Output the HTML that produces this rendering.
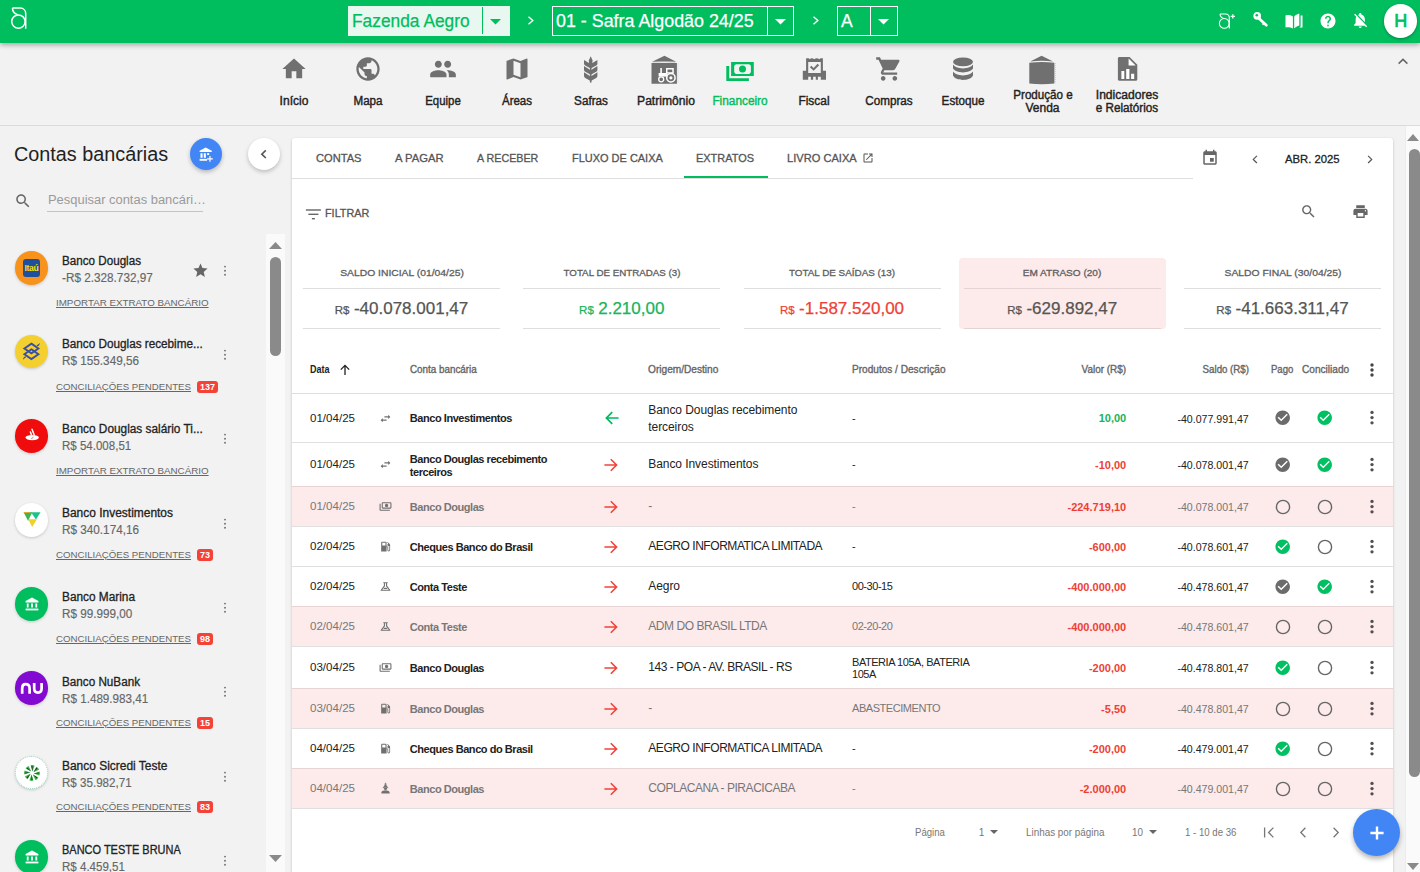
<!DOCTYPE html>
<html><head><meta charset="utf-8"><style>
html,body{margin:0;padding:0}
body{width:1420px;height:872px;overflow:hidden;background:#f2f2f2;position:relative;font-family:"Liberation Sans",sans-serif}
.a{position:absolute}
.t{position:absolute;white-space:nowrap}
</style></head><body>
<div class="a" style="left:0px;top:0px;width:1420px;height:43px;background:#00bd5e;box-shadow:0 2px 5px rgba(0,0,0,.32);z-index:2"></div>
<div class="a" style="left:0;top:0;width:1420px;height:43px;z-index:3">
<svg class="a" style="left:0px;top:0px;" width="40" height="40" viewBox="0 0 40 40"><g fill="none" stroke="#fff" stroke-width="1.5"><circle cx="18.4" cy="21.6" r="6.7"/><path d="M12.4 8.1H20.3C23.5 8.1 25.7 10.5 25.7 13.5V28.8"/><path d="M12.4 8.1C12.6 11.8 15 13.8 17.6 14.6"/></g></svg>
<div class="a" style="left:348px;top:6px;width:162px;height:30px;background:#e8f7ef"></div>
<div id="t0" class="t" style="left:352.3px;top:13.19px;font-size:17.5px;line-height:17.5px;font-weight:400;color:#00bd5e;transform:scaleX(0.9915);transform-origin:0 50%;-webkit-text-stroke:0.25px #00bd5e;">Fazenda Aegro</div>
<div class="a" style="left:482px;top:7px;width:1.3px;height:27px;background:#00bd5e"></div>
<svg class="a" style="left:490px;top:18.5px;" width="11" height="6" viewBox="0 0 11 6"><path d="M0 0H11L5.5 5.5z" fill="#00bd5e"/></svg>
<svg class="a" style="left:526px;top:15px;" width="9" height="11" viewBox="0 0 9 11"><path d="M2.5 1.8L6.8 5.5L2.5 9.2" fill="none" stroke="#fff" stroke-width="1.4"/></svg>
<div class="a" style="left:552px;top:6px;width:242px;height:30px;box-sizing:border-box;border:1.3px solid #fff"></div>
<div id="t1" class="t" style="left:556.3px;top:13.19px;font-size:17.5px;line-height:17.5px;font-weight:400;color:#fff;transform:scaleX(1.0205);transform-origin:0 50%;-webkit-text-stroke:0.25px #fff;">01 - Safra Algodão 24/25</div>
<div class="a" style="left:767px;top:7px;width:1.3px;height:28px;background:#fff"></div>
<svg class="a" style="left:775px;top:18.5px;" width="11" height="6" viewBox="0 0 11 6"><path d="M0 0H11L5.5 5.5z" fill="#fff"/></svg>
<svg class="a" style="left:811px;top:15px;" width="9" height="11" viewBox="0 0 9 11"><path d="M2.5 1.8L6.8 5.5L2.5 9.2" fill="none" stroke="#fff" stroke-width="1.4"/></svg>
<div class="a" style="left:837px;top:6px;width:61px;height:30px;box-sizing:border-box;border:1.3px solid #fff"></div>
<div id="t2" class="t" style="left:841px;top:13.19px;font-size:17.5px;line-height:17.5px;font-weight:400;color:#fff;transform:scaleX(1.0000);transform-origin:0 50%;-webkit-text-stroke:0.25px #fff;">A</div>
<div class="a" style="left:870px;top:7px;width:1.3px;height:28px;background:#fff"></div>
<svg class="a" style="left:878.3px;top:18.5px;" width="11" height="6" viewBox="0 0 11 6"><path d="M0 0H11L5.5 5.5z" fill="#fff"/></svg>
<svg class="a" style="left:1216px;top:10px;" width="24" height="22" viewBox="0 0 24 22"><g fill="none" stroke="#fff" stroke-width="1.1"><circle cx="8.3" cy="13.4" r="4.9"/><path d="M4 4H9.5C11.8 4 13.3 5.8 13.3 8V18.6"/><path d="M4 4C4.2 6.6 6 8 7.8 8.6"/><path d="M16.8 4.2V8.6M14.6 6.4H19" stroke-width="1.3"/></g></svg>
<svg class="a" style="left:1251px;top:10px;" width="20" height="20" viewBox="0 0 20 20"><circle cx="6.2" cy="5.9" r="3.8" fill="#fff"/><circle cx="5.8" cy="5.3" r="1.3" fill="#00bd5e"/><path d="M8 8.4L15.4 15.2" stroke="#fff" stroke-width="2.7" stroke-linecap="round"/><path d="M12.2 12.4L11 14.2L12.2 15.3L13.6 13.6z" fill="#fff"/></svg>
<svg class="a" style="left:1284px;top:12px;" width="20" height="18" viewBox="0 0 20 18"><path fill="#fff" d="M1.5 3.4C3.6 2.8 6.2 3 8.9 4.4V16.6C6.2 15.2 3.6 15 1.5 15.6z M10.2 4.4C11.5 3.2 13.2 2.1 15.3 1.4V13.6C13.2 14.3 11.5 15.4 10.2 16.6z M16.6 3.4H18.5V15.6C17.2 15.3 16 15.4 15.3 15.5L16.6 14.5z"/></svg>
<svg class="a" style="left:1318.6px;top:11.600000000000001px;" width="18" height="18" viewBox="0 0 24 24"><path fill="#fff" d="M12 2C6.48 2 2 6.48 2 12s4.48 10 10 10 10-4.48 10-10S17.52 2 12 2zm1 17h-2v-2h2v2zm2.07-7.75l-.9.92C13.45 12.9 13 13.5 13 15h-2v-.5c0-1.1.45-2.1 1.17-2.83l1.24-1.26c.37-.36.59-.86.59-1.41 0-1.1-.9-2-2-2s-2 .9-2 2H8c0-2.21 1.79-4 4-4s4 1.79 4 4c0 .88-.36 1.68-.93 2.25z"/></svg>
<svg class="a" style="left:1351.25px;top:10.55px;" width="18.5" height="18.5" viewBox="0 0 24 24"><path fill="#fff" d="M20 18.69L7.84 6.14 5.27 3.49 4 4.76l2.8 2.8v.01c-.52.99-.8 2.16-.8 3.42v5l-2 2v1h13.73l2 2L21 19.72l-1-1.03zM12 22c1.11 0 2-.89 2-2h-4c0 1.11.89 2 2 2zm6-7.32V11c0-3.08-1.64-5.64-4.5-6.32V4c0-.83-.67-1.5-1.5-1.5s-1.5.67-1.5 1.5v.68c-.15.03-.29.08-.42.12-.1.03-.2.07-.3.11h-.01c-.01 0-.01 0-.02.01-.23.09-.46.2-.68.31 0 0-.01 0-.01.01L18 14.68z"/></svg>
<div class="a" style="left:1383.6px;top:4px;width:33.6px;height:33.6px;border-radius:50%;background:#fff;box-shadow:0 1px 3px rgba(0,0,0,.3)"></div>
<div id="t3" class="t" style="left:1400.8px;top:11.86px;font-size:18px;line-height:18px;font-weight:400;color:#00bd5e;transform:translateX(-50%) scaleX(1.0000);transform-origin:50% 50%;-webkit-text-stroke:0.7px #00bd5e;">H</div>
</div>
<div class="a" style="left:0px;top:125px;width:1420px;height:1px;background:#dcdcdc"></div>
<div id="t4" class="t" style="left:293.8px;top:95.04px;font-size:12px;line-height:12px;font-weight:400;color:#222;transform:translateX(-50%) scaleX(1.0039);transform-origin:50% 50%;-webkit-text-stroke:0.4px #222;">Início</div>
<div id="t5" class="t" style="left:368px;top:95.04px;font-size:12px;line-height:12px;font-weight:400;color:#222;transform:translateX(-50%) scaleX(0.9690);transform-origin:50% 50%;-webkit-text-stroke:0.4px #222;">Mapa</div>
<div id="t6" class="t" style="left:442.5px;top:95.04px;font-size:12px;line-height:12px;font-weight:400;color:#222;transform:translateX(-50%) scaleX(0.9498);transform-origin:50% 50%;-webkit-text-stroke:0.4px #222;">Equipe</div>
<div id="t7" class="t" style="left:516.9px;top:95.04px;font-size:12px;line-height:12px;font-weight:400;color:#222;transform:translateX(-50%) scaleX(0.9567);transform-origin:50% 50%;-webkit-text-stroke:0.4px #222;">Áreas</div>
<div id="t8" class="t" style="left:591.3px;top:95.04px;font-size:12px;line-height:12px;font-weight:400;color:#222;transform:translateX(-50%) scaleX(0.9744);transform-origin:50% 50%;-webkit-text-stroke:0.4px #222;">Safras</div>
<div id="t9" class="t" style="left:665.6px;top:95.04px;font-size:12px;line-height:12px;font-weight:400;color:#222;transform:translateX(-50%) scaleX(1.0094);transform-origin:50% 50%;-webkit-text-stroke:0.4px #222;">Patrimônio</div>
<div id="t10" class="t" style="left:740.1px;top:95.04px;font-size:12px;line-height:12px;font-weight:400;color:#00bd5e;transform:translateX(-50%) scaleX(0.9852);transform-origin:50% 50%;-webkit-text-stroke:0.4px #00bd5e;">Financeiro</div>
<div id="t11" class="t" style="left:814.3px;top:95.04px;font-size:12px;line-height:12px;font-weight:400;color:#222;transform:translateX(-50%) scaleX(0.9922);transform-origin:50% 50%;-webkit-text-stroke:0.4px #222;">Fiscal</div>
<div id="t12" class="t" style="left:888.6px;top:95.04px;font-size:12px;line-height:12px;font-weight:400;color:#222;transform:translateX(-50%) scaleX(0.9715);transform-origin:50% 50%;-webkit-text-stroke:0.4px #222;">Compras</div>
<div id="t13" class="t" style="left:963px;top:95.04px;font-size:12px;line-height:12px;font-weight:400;color:#222;transform:translateX(-50%) scaleX(0.9717);transform-origin:50% 50%;-webkit-text-stroke:0.4px #222;">Estoque</div>
<div id="t14" class="t" style="left:1042.5px;top:88.74px;font-size:12px;line-height:12px;font-weight:400;color:#222;transform:translateX(-50%) scaleX(0.9692);transform-origin:50% 50%;-webkit-text-stroke:0.4px #222;">Produção e</div>
<div id="t15" class="t" style="left:1042.5px;top:102.04px;font-size:12px;line-height:12px;font-weight:400;color:#222;transform:translateX(-50%) scaleX(1.0000);transform-origin:50% 50%;-webkit-text-stroke:0.4px #222;">Venda</div>
<div id="t16" class="t" style="left:1127.4px;top:88.74px;font-size:12px;line-height:12px;font-weight:400;color:#222;transform:translateX(-50%) scaleX(1.0057);transform-origin:50% 50%;-webkit-text-stroke:0.4px #222;">Indicadores</div>
<div id="t17" class="t" style="left:1127.4px;top:102.04px;font-size:12px;line-height:12px;font-weight:400;color:#222;transform:translateX(-50%) scaleX(0.9745);transform-origin:50% 50%;-webkit-text-stroke:0.4px #222;">e Relatórios</div>
<svg class="a" style="left:279.5px;top:55.0px;" width="28" height="28" viewBox="0 0 24 24"><path fill="#707070" d="M10 20v-6h4v6h5v-8h3L12 3 2 12h3v8z"/></svg>
<svg class="a" style="left:354.0px;top:55.0px;" width="28" height="28" viewBox="0 0 24 24"><path fill="#707070" d="M12 2C6.48 2 2 6.48 2 12s4.48 10 10 10 10-4.48 10-10S17.52 2 12 2zm-1 17.93c-3.95-.49-7-3.85-7-7.93 0-.62.08-1.21.21-1.79L9 15v1c0 1.1.9 2 2 2v1.93zm6.9-2.54c-.26-.81-1-1.39-1.9-1.39h-1v-3c0-.55-.45-1-1-1H8v-2h2c.55 0 1-.45 1-1V7h2c1.1 0 2-.9 2-2v-.41c2.93 1.19 5 4.06 5 7.41 0 2.08-.8 3.97-2.1 5.39z"/></svg>
<svg class="a" style="left:428.5px;top:55.0px;" width="28" height="28" viewBox="0 0 24 24"><path fill="#707070" d="M16 11c1.66 0 2.99-1.34 2.99-3S17.66 5 16 5c-1.66 0-3 1.34-3 3s1.34 3 3 3zm-8 0c1.66 0 2.99-1.34 2.99-3S9.66 5 8 5C6.34 5 5 6.34 5 8s1.34 3 3 3zm0 2c-2.33 0-7 1.17-7 3.5V19h14v-2.5c0-2.33-4.67-3.5-7-3.5zm8 0c-.29 0-.62.02-.97.05 1.16.84 1.97 1.97 1.97 3.45V19h6v-2.5c0-2.33-4.67-3.5-7-3.5z"/></svg>
<svg class="a" style="left:502.9px;top:55.0px;" width="28" height="28" viewBox="0 0 24 24"><path fill="#707070" d="M20.5 3l-.16.03L15 5.1 9 3 3.36 4.9c-.21.07-.36.25-.36.48V20.5c0 .28.22.5.5.5l.16-.03L9 18.9l6 2.1 5.64-1.9c.21-.07.36-.25.36-.48V3.5c0-.28-.22-.5-.5-.5zM15 19l-6-2.11V5l6 2.11V19z"/></svg>
<svg class="a" style="left:577.3px;top:55px;" width="28" height="28" viewBox="0 0 28 28"><g fill="#707070"><path d="M13.7 1.2L15.5 5.2L15.2 9.6H12.2L11.9 5.2z"/><path d="M7 4.9L13.7 9.1L20.4 4.9V8.7C20.4 9.5 19.9 10.1 19.2 10.6L13.7 13.6L8.2 10.6C7.5 10.1 7 9.5 7 8.7z"/><path d="M7 11.1L13.7 15.3L20.4 11.1V14.9C20.4 15.7 19.9 16.3 19.2 16.8L13.7 19.8L8.2 16.8C7.5 16.3 7 15.7 7 14.9z"/><path d="M7 17.3L13.7 21.5L20.4 17.3V21.1C20.4 21.9 19.9 22.5 19.2 23L13.7 26L8.2 23C7.5 22.5 7 21.9 7 21.1z"/><path d="M12.9 8H14.5V27.6H12.9z"/></g></svg>
<svg class="a" style="left:648px;top:52px;" width="36" height="36" viewBox="0 0 36 36"><path fill="#707070" d="M4.1 9.7L16.5 3.7L28.1 9.7z M3.5 11H28.9V31.8H3.5z"/><path d="M5 10.4Q16.5 9.2 27.4 10.4" stroke="#cfcfcf" stroke-width="0.8" fill="none"/><path fill="none" stroke="#d6dff0" stroke-width="1.6" d="M29.9 11.4V31.6" stroke-dasharray="1 1"/><g fill="#fff"><path d="M12.3 16H13.9V21H12.3z"/><path d="M18 16H25.8V21.4H18z M19.5 17.4V20.2H24.3V17.4z"/><path d="M10.6 21H19.4V24.6H10.6z"/><circle cx="22.9" cy="25.8" r="1.6"/></g><g fill="none" stroke="#fff"><circle cx="13.2" cy="27.3" r="2.5" stroke-width="1.3"/><circle cx="22.9" cy="25.8" r="4.2" stroke-width="1.5"/></g></svg>
<svg class="a" style="left:726px;top:55px;" width="28" height="28" viewBox="0 0 28 28"><path fill="#00bd5e" fill-rule="evenodd" d="M5.1 6.9H27.8V21H5.1z M9.8 9.2L8.2 10.8V17.3L9.8 18.9H23.3L24.9 17.3V10.8L23.3 9.2z"/><circle cx="16.5" cy="14" r="3.5" fill="#00bd5e"/><path fill="#00bd5e" d="M0.3 11H3.2V23.3H22.9V25.9H0.3z"/></svg>
<svg class="a" style="left:796px;top:52px;" width="36" height="36" viewBox="0 0 36 36"><path fill="#707070" fill-rule="evenodd" d="M10.1 6.2H12.8L13.6 7.2Q15.9 5.4 18.2 7.2Q20.7 5.4 23.4 7.2L24.4 6.2H26.9V18.8H30V27.7H24.8V24.8H21.9V27.7H19.8V24.8H17.1V27.7H14.9V24.8H12.2V27.7H6.8V18.8H10.1z M12.2 9.9V21.1H24.8V9.9z"/><path d="M14.6 14.6L17.6 17.4L22.4 12.4" fill="none" stroke="#707070" stroke-width="2.1"/></svg>
<svg class="a" style="left:874.6px;top:55.0px;" width="28" height="28" viewBox="0 0 24 24"><path fill="#707070" d="M7 18c-1.1 0-1.99.9-1.99 2S5.9 22 7 22s2-.9 2-2-.9-2-2-2zM1 2v2h2l3.6 7.59-1.35 2.45c-.16.28-.25.61-.25.96 0 1.1.9 2 2 2h12v-2H7.42c-.14 0-.25-.11-.25-.25l.03-.12.9-1.63h7.45c.75 0 1.41-.41 1.75-1.03l3.58-6.49c.08-.14.12-.31.12-.48 0-.55-.45-1-1-1H5.21l-.94-2H1zm16 16c-1.1 0-1.99.9-1.99 2s.89 2 1.99 2 2-.9 2-2-.9-2-2-2z"/></svg>
<svg class="a" style="left:949px;top:55px;" width="28" height="28" viewBox="0 0 28 28"><g fill="#707070"><ellipse cx="14" cy="6.8" rx="10" ry="4.4"/><path d="M4 9.6C5.4 12 9.4 13.4 14 13.4S22.6 12 24 9.6V13.6C22.6 16 18.6 17.4 14 17.4S5.4 16 4 13.6z"/><path d="M4 16.6C5.4 19 9.4 20.4 14 20.4S22.6 19 24 16.6V20.6C22.6 23.6 18.6 25 14 25S5.4 23.6 4 20.6z"/></g></svg>
<svg class="a" style="left:1028.5px;top:55px;" width="28" height="30" viewBox="0 0 28 30"><path fill="#707070" d="M12.6 0.7L24.1 6.4Q12.6 4.9 1.2 6.4z M0.3 7.8Q12.8 6.4 25.4 7.8V28.4Q12.8 30 0.3 28.4z"/><path fill="none" stroke="#d9cfbd" stroke-width="1.2" d="M26.4 8V28.2" stroke-dasharray="1 1"/></svg>
<svg class="a" style="left:1113.9px;top:55px;" width="28" height="28" viewBox="0 0 28 28"><path fill="#707070" d="M5.4 2H15.6L23.3 9.7V24.3C23.3 25.1 22.6 25.8 21.8 25.8H5.4C4.6 25.8 3.9 25.1 3.9 24.3V3.5C3.9 2.7 4.6 2 5.4 2z"/><path fill="#fff" d="M14.6 3.6V10.4H21.6z M7.4 16.1H10.3V24H7.4z M12.2 13.9H15.4V24H12.2z M17.1 18.8H20.2V24H17.1z"/></svg>
<svg class="a" style="left:1396px;top:55px;" width="14" height="12" viewBox="0 0 14 12"><path d="M2.6 8.6L7 4.4L11.4 8.6" fill="none" stroke="#666" stroke-width="1.5"/></svg>
<div id="t18" class="t" style="left:13.9px;top:143.87px;font-size:20px;line-height:20px;font-weight:400;color:#222;transform:scaleX(0.9906);transform-origin:0 50%;">Contas bancárias</div>
<div class="a" style="left:190px;top:138px;width:32px;height:32px;border-radius:50%;background:#4286f5;box-shadow:0 2px 4px rgba(0,0,0,.25)"></div>
<svg class="a" style="left:196.7px;top:145.5px;" width="17.4" height="17.4" viewBox="0 0 20 20"><g fill="#fff"><path d="M10 1.8L17 5.4V7H3V5.4z"/><path d="M4 8.2H6.4V13.6H4z M7.8 8.2H10.2V13.6H7.8z"/><path d="M11.6 8.2H14V10.4H11.6z"/><path d="M3 14.8H11.6V17H3z"/><path d="M14.2 11.6H15.6V14.2H18.2V15.6H15.6V18.2H14.2V15.6H11.6V14.2H14.2z"/></g></svg>
<div class="a" style="left:248px;top:138px;width:32px;height:32px;border-radius:50%;background:#fff;box-shadow:0 2px 4px rgba(0,0,0,.22)"></div>
<svg class="a" style="left:258px;top:148px;" width="12" height="12" viewBox="0 0 12 12"><path d="M7.8 2.4L3.8 6.2L7.8 10" fill="none" stroke="#555" stroke-width="1.6"/></svg>
<svg class="a" style="left:14.399999999999999px;top:192.0px;" width="18" height="18" viewBox="0 0 24 24"><path fill="#666" d="M15.5 14h-.79l-.28-.27C15.41 12.59 16 11.11 16 9.5 16 5.91 13.09 3 9.5 3S3 5.91 3 9.5 5.91 16 9.5 16c1.61 0 3.09-.59 4.23-1.57l.27.28v.79l5 4.99L20.49 19l-4.99-5zm-6 0C7.01 14 5 11.99 5 9.5S7.01 5 9.5 5 14 7.01 14 9.5 11.99 14 9.5 14z"/></svg>
<div id="t19" class="t" style="left:48px;top:194.02px;font-size:12.5px;line-height:12.5px;font-weight:400;color:#9a9a9a;transform:scaleX(1.0336);transform-origin:0 50%;">Pesquisar contas bancári…</div>
<div class="a" style="left:47px;top:211px;width:156px;height:1px;background:#c4c4c4"></div>
<div class="a" style="left:14.75px;top:251.25px;width:33.5px;height:33.5px;border-radius:50%;box-shadow:0 1px 3px rgba(0,0,0,.18);background:#f7931d"></div>
<div class="a" style="left:22.9px;top:259.4px;width:17.2px;height:17.2px;border-radius:3px;background:#1f4f9f"></div>
<div class="t" style="left:21.5px;top:264.2px;width:20px;text-align:center;font-size:8.6px;line-height:9px;font-weight:700;color:#ffe000;letter-spacing:-0.3px">Itaú</div>
<div id="t20" class="t" style="left:62.2px;top:254.84px;font-size:12px;line-height:12px;font-weight:400;color:#222;transform:scaleX(0.9706);transform-origin:0 50%;-webkit-text-stroke:0.3px #222;">Banco Douglas</div>
<div id="t21" class="t" style="left:62px;top:271.74px;font-size:12px;line-height:12px;font-weight:400;color:#666;transform:scaleX(0.9790);transform-origin:0 50%;-webkit-text-stroke:0.15px #666;">-R$ 2.328.732,97</div>
<div id="t22" class="t" style="left:56.4px;top:298.10px;font-size:9.8px;line-height:9.8px;font-weight:400;color:#666;transform:scaleX(0.9988);transform-origin:0 50%;text-decoration:underline;text-underline-offset:1.3px;text-decoration-thickness:1px;">IMPORTAR EXTRATO BANCÁRIO</div>
<svg class="a" style="left:222px;top:263.4px;" width="6" height="16" viewBox="0 0 6 16"><g fill="#707070"><circle cx="3" cy="3.6" r="0.95"/><circle cx="3" cy="7.7" r="0.95"/><circle cx="3" cy="11.8" r="0.95"/></g></svg>
<svg class="a" style="left:192.0px;top:262.0px;" width="17" height="17" viewBox="0 0 24 24"><path fill="#666" d="M12 17.27L18.18 21l-1.64-7.03L22 9.24l-7.19-.61L12 2 9.19 8.63 2 9.24l5.46 4.73L5.82 21z"/></svg>
<div class="a" style="left:14.75px;top:334.85px;width:33.5px;height:33.5px;border-radius:50%;box-shadow:0 1px 3px rgba(0,0,0,.18);background:#f3d02f"></div>
<svg class="a" style="left:14.0px;top:334.0px;" width="36" height="36" viewBox="0 0 36 36"><g fill="none" stroke="#3a4fa6" stroke-width="1.9" stroke-linejoin="miter"><path d="M17.4 9.6L24.4 14.5L17.4 19.4L10.4 14.5z"/><path d="M17.4 15.3L24.4 20.2L17.4 25.1L10.4 20.2z"/></g><path d="M22.6 11.6L25.9 8.9L25.2 11.2L23.6 12.4z M12.2 23L8.9 25.7L9.6 23.4L11.2 22.2z" fill="#3a4fa6"/></svg>
<div id="t23" class="t" style="left:62.2px;top:338.44px;font-size:12px;line-height:12px;font-weight:400;color:#222;transform:scaleX(0.9772);transform-origin:0 50%;-webkit-text-stroke:0.3px #222;">Banco Douglas recebime...</div>
<div id="t24" class="t" style="left:62px;top:355.34px;font-size:12px;line-height:12px;font-weight:400;color:#666;transform:scaleX(0.9780);transform-origin:0 50%;-webkit-text-stroke:0.15px #666;">R$ 155.349,56</div>
<div id="t25" class="t" style="left:56.4px;top:382.10px;font-size:9.8px;line-height:9.8px;font-weight:400;color:#666;transform:scaleX(0.9880);transform-origin:0 50%;text-decoration:underline;text-underline-offset:1.3px;text-decoration-thickness:1px;">CONCILIAÇÕES PENDENTES</div>
<div class="a" style="left:197px;top:380.8px;width:21px;height:12.6px;border-radius:3px;background:#f44336"></div>
<div id="t26" class="t" style="left:207.5px;top:382.98px;font-size:9px;line-height:9px;font-weight:700;color:#fff;transform:translateX(-50%) scaleX(1.0000);transform-origin:50% 50%;">137</div>
<svg class="a" style="left:222px;top:347.0px;" width="6" height="16" viewBox="0 0 6 16"><g fill="#707070"><circle cx="3" cy="3.6" r="0.95"/><circle cx="3" cy="7.7" r="0.95"/><circle cx="3" cy="11.8" r="0.95"/></g></svg>
<div class="a" style="left:14.75px;top:419.15px;width:33.5px;height:33.5px;border-radius:50%;box-shadow:0 1px 3px rgba(0,0,0,.18);background:#f00c0c"></div>
<svg class="a" style="left:21.5px;top:425.9px;" width="20" height="20" viewBox="0 0 20 20"><ellipse cx="10.2" cy="11.6" rx="6.7" ry="2.7" fill="#fff"/><g stroke="#fff" stroke-width="1.5" stroke-linecap="round"><path d="M8.4 6L10.4 11.4"/><path d="M10 3.2L12.2 9"/></g><path d="M9.2 12.6L11.4 11.4" stroke="#f00c0c" stroke-width="0.6"/></svg>
<div id="t27" class="t" style="left:62.2px;top:422.74px;font-size:12px;line-height:12px;font-weight:400;color:#222;transform:scaleX(0.9863);transform-origin:0 50%;-webkit-text-stroke:0.3px #222;">Banco Douglas salário Ti...</div>
<div id="t28" class="t" style="left:62px;top:439.64px;font-size:12px;line-height:12px;font-weight:400;color:#666;transform:scaleX(0.9603);transform-origin:0 50%;-webkit-text-stroke:0.15px #666;">R$ 54.008,51</div>
<div id="t29" class="t" style="left:56.4px;top:466.10px;font-size:9.8px;line-height:9.8px;font-weight:400;color:#666;transform:scaleX(0.9988);transform-origin:0 50%;text-decoration:underline;text-underline-offset:1.3px;text-decoration-thickness:1px;">IMPORTAR EXTRATO BANCÁRIO</div>
<svg class="a" style="left:222px;top:431.3px;" width="6" height="16" viewBox="0 0 6 16"><g fill="#707070"><circle cx="3" cy="3.6" r="0.95"/><circle cx="3" cy="7.7" r="0.95"/><circle cx="3" cy="11.8" r="0.95"/></g></svg>
<div class="a" style="left:14.75px;top:503.04999999999995px;width:33.5px;height:33.5px;border-radius:50%;box-shadow:0 1px 3px rgba(0,0,0,.18);background:#fff"></div>
<svg class="a" style="left:21.5px;top:509.79999999999995px;" width="20" height="20" viewBox="0 0 20 20"><path d="M9 2.25H18.5L14 9.5z" fill="#1cc389"/><path d="M1.6 2.25H10.2L6.1 10.9z" fill="#3fb54f"/><path d="M6.3 9.3H15L10.1 17.1z" fill="#f0d12b"/><path d="M9.9 5.2L8.1 8.9H11.7z" fill="#fff"/><path d="M1.6 2.25H7.4L7.1 2.9H1.9z" fill="#f7a21b"/></svg>
<div id="t30" class="t" style="left:62.2px;top:507.04px;font-size:12px;line-height:12px;font-weight:400;color:#222;transform:scaleX(0.9964);transform-origin:0 50%;-webkit-text-stroke:0.3px #222;">Banco Investimentos</div>
<div id="t31" class="t" style="left:62px;top:523.94px;font-size:12px;line-height:12px;font-weight:400;color:#666;transform:scaleX(0.9780);transform-origin:0 50%;-webkit-text-stroke:0.15px #666;">R$ 340.174,16</div>
<div id="t32" class="t" style="left:56.4px;top:550.10px;font-size:9.8px;line-height:9.8px;font-weight:400;color:#666;transform:scaleX(0.9880);transform-origin:0 50%;text-decoration:underline;text-underline-offset:1.3px;text-decoration-thickness:1px;">CONCILIAÇÕES PENDENTES</div>
<div class="a" style="left:197px;top:548.8px;width:16px;height:12.6px;border-radius:3px;background:#f44336"></div>
<div id="t33" class="t" style="left:205.0px;top:550.98px;font-size:9px;line-height:9px;font-weight:700;color:#fff;transform:translateX(-50%) scaleX(1.0000);transform-origin:50% 50%;">73</div>
<svg class="a" style="left:222px;top:515.6px;" width="6" height="16" viewBox="0 0 6 16"><g fill="#707070"><circle cx="3" cy="3.6" r="0.95"/><circle cx="3" cy="7.7" r="0.95"/><circle cx="3" cy="11.8" r="0.95"/></g></svg>
<div class="a" style="left:14.75px;top:587.25px;width:33.5px;height:33.5px;border-radius:50%;box-shadow:0 1px 3px rgba(0,0,0,.18);background:#00bd5e"></div>
<svg class="a" style="left:23.5px;top:596px;" width="16" height="16" viewBox="0 0 16 16"><g fill="#fff"><path d="M8 1.6L14.4 5V6.4H1.6V5z"/><path d="M2.8 7.4H4.6V11.6H2.8z M7.1 7.4H8.9V11.6H7.1z M11.4 7.4H13.2V11.6H11.4z"/><path d="M1.6 12.6H14.4V14.4H1.6z"/></g></svg>
<div id="t34" class="t" style="left:62.2px;top:591.34px;font-size:12px;line-height:12px;font-weight:400;color:#222;transform:scaleX(0.9859);transform-origin:0 50%;-webkit-text-stroke:0.3px #222;">Banco Marina</div>
<div id="t35" class="t" style="left:62px;top:608.24px;font-size:12px;line-height:12px;font-weight:400;color:#666;transform:scaleX(0.9742);transform-origin:0 50%;-webkit-text-stroke:0.15px #666;">R$ 99.999,00</div>
<div id="t36" class="t" style="left:56.4px;top:634.10px;font-size:9.8px;line-height:9.8px;font-weight:400;color:#666;transform:scaleX(0.9880);transform-origin:0 50%;text-decoration:underline;text-underline-offset:1.3px;text-decoration-thickness:1px;">CONCILIAÇÕES PENDENTES</div>
<div class="a" style="left:197px;top:632.8px;width:16px;height:12.6px;border-radius:3px;background:#f44336"></div>
<div id="t37" class="t" style="left:205.0px;top:634.98px;font-size:9px;line-height:9px;font-weight:700;color:#fff;transform:translateX(-50%) scaleX(1.0000);transform-origin:50% 50%;">98</div>
<svg class="a" style="left:222px;top:599.9000000000001px;" width="6" height="16" viewBox="0 0 6 16"><g fill="#707070"><circle cx="3" cy="3.6" r="0.95"/><circle cx="3" cy="7.7" r="0.95"/><circle cx="3" cy="11.8" r="0.95"/></g></svg>
<div class="a" style="left:14.75px;top:671.25px;width:33.5px;height:33.5px;border-radius:50%;box-shadow:0 1px 3px rgba(0,0,0,.18);background:#820ad1"></div>
<svg class="a" style="left:19.5px;top:681px;" width="24" height="14" viewBox="0 0 24 14"><g fill="none" stroke="#fff" stroke-width="2.7"><path d="M2.2 12.8V7.2C2.2 4.6 3.6 3.2 5.6 3.2C8 3.2 9.6 4.8 9.6 7.4V12.8"/><path d="M14.2 2V7.6C14.2 10.2 15.8 11.6 18 11.6C20.2 11.6 21.6 10.2 21.6 7.6V2"/></g></svg>
<div id="t38" class="t" style="left:62.2px;top:675.64px;font-size:12px;line-height:12px;font-weight:400;color:#222;transform:scaleX(0.9742);transform-origin:0 50%;-webkit-text-stroke:0.3px #222;">Banco NuBank</div>
<div id="t39" class="t" style="left:62px;top:692.54px;font-size:12px;line-height:12px;font-weight:400;color:#666;transform:scaleX(0.9724);transform-origin:0 50%;-webkit-text-stroke:0.15px #666;">R$ 1.489.983,41</div>
<div id="t40" class="t" style="left:56.4px;top:718.10px;font-size:9.8px;line-height:9.8px;font-weight:400;color:#666;transform:scaleX(0.9880);transform-origin:0 50%;text-decoration:underline;text-underline-offset:1.3px;text-decoration-thickness:1px;">CONCILIAÇÕES PENDENTES</div>
<div class="a" style="left:197px;top:716.8px;width:16px;height:12.6px;border-radius:3px;background:#f44336"></div>
<div id="t41" class="t" style="left:205.0px;top:718.98px;font-size:9px;line-height:9px;font-weight:700;color:#fff;transform:translateX(-50%) scaleX(1.0000);transform-origin:50% 50%;">15</div>
<svg class="a" style="left:222px;top:684.2px;" width="6" height="16" viewBox="0 0 6 16"><g fill="#707070"><circle cx="3" cy="3.6" r="0.95"/><circle cx="3" cy="7.7" r="0.95"/><circle cx="3" cy="11.8" r="0.95"/></g></svg>
<div class="a" style="left:14.75px;top:755.85px;width:33.5px;height:33.5px;border-radius:50%;box-shadow:0 1px 3px rgba(0,0,0,.18);background:#fff;border:0.8px dotted #9ad8c0;box-sizing:border-box"></div>
<svg class="a" style="left:21.5px;top:762.6px;" width="20" height="20" viewBox="0 0 20 20"><g transform="rotate(0 10 10)"><path d="M10.4 8.4L8.6 2.4C9.8 1.9 11.4 2 12.6 2.7z" fill="#3bb54a"/><path d="M10.4 8.4L9.4 3.2L10.6 3.1z" fill="#1d2b22"/></g><g transform="rotate(45 10 10)"><path d="M10.4 8.4L8.6 2.4C9.8 1.9 11.4 2 12.6 2.7z" fill="#3bb54a"/><path d="M10.4 8.4L9.4 3.2L10.6 3.1z" fill="#1d2b22"/></g><g transform="rotate(90 10 10)"><path d="M10.4 8.4L8.6 2.4C9.8 1.9 11.4 2 12.6 2.7z" fill="#3bb54a"/><path d="M10.4 8.4L9.4 3.2L10.6 3.1z" fill="#1d2b22"/></g><g transform="rotate(135 10 10)"><path d="M10.4 8.4L8.6 2.4C9.8 1.9 11.4 2 12.6 2.7z" fill="#3bb54a"/><path d="M10.4 8.4L9.4 3.2L10.6 3.1z" fill="#1d2b22"/></g><g transform="rotate(180 10 10)"><path d="M10.4 8.4L8.6 2.4C9.8 1.9 11.4 2 12.6 2.7z" fill="#3bb54a"/><path d="M10.4 8.4L9.4 3.2L10.6 3.1z" fill="#1d2b22"/></g><g transform="rotate(225 10 10)"><path d="M10.4 8.4L8.6 2.4C9.8 1.9 11.4 2 12.6 2.7z" fill="#3bb54a"/><path d="M10.4 8.4L9.4 3.2L10.6 3.1z" fill="#1d2b22"/></g><g transform="rotate(270 10 10)"><path d="M10.4 8.4L8.6 2.4C9.8 1.9 11.4 2 12.6 2.7z" fill="#3bb54a"/><path d="M10.4 8.4L9.4 3.2L10.6 3.1z" fill="#1d2b22"/></g><g transform="rotate(315 10 10)"><path d="M10.4 8.4L8.6 2.4C9.8 1.9 11.4 2 12.6 2.7z" fill="#3bb54a"/><path d="M10.4 8.4L9.4 3.2L10.6 3.1z" fill="#1d2b22"/></g></svg>
<div id="t42" class="t" style="left:62.2px;top:759.94px;font-size:12px;line-height:12px;font-weight:400;color:#222;transform:scaleX(0.9958);transform-origin:0 50%;-webkit-text-stroke:0.3px #222;">Banco Sicredi Teste</div>
<div id="t43" class="t" style="left:62px;top:776.84px;font-size:12px;line-height:12px;font-weight:400;color:#666;transform:scaleX(0.9658);transform-origin:0 50%;-webkit-text-stroke:0.15px #666;">R$ 35.982,71</div>
<div id="t44" class="t" style="left:56.4px;top:802.10px;font-size:9.8px;line-height:9.8px;font-weight:400;color:#666;transform:scaleX(0.9880);transform-origin:0 50%;text-decoration:underline;text-underline-offset:1.3px;text-decoration-thickness:1px;">CONCILIAÇÕES PENDENTES</div>
<div class="a" style="left:197px;top:800.8px;width:16px;height:12.6px;border-radius:3px;background:#f44336"></div>
<div id="t45" class="t" style="left:205.0px;top:802.98px;font-size:9px;line-height:9px;font-weight:700;color:#fff;transform:translateX(-50%) scaleX(1.0000);transform-origin:50% 50%;">83</div>
<svg class="a" style="left:222px;top:768.5px;" width="6" height="16" viewBox="0 0 6 16"><g fill="#707070"><circle cx="3" cy="3.6" r="0.95"/><circle cx="3" cy="7.7" r="0.95"/><circle cx="3" cy="11.8" r="0.95"/></g></svg>
<div class="a" style="left:14.75px;top:840.25px;width:33.5px;height:33.5px;border-radius:50%;box-shadow:0 1px 3px rgba(0,0,0,.18);background:#00bd5e"></div>
<svg class="a" style="left:23.5px;top:849px;" width="16" height="16" viewBox="0 0 16 16"><g fill="#fff"><path d="M8 1.6L14.4 5V6.4H1.6V5z"/><path d="M2.8 7.4H4.6V11.6H2.8z M7.1 7.4H8.9V11.6H7.1z M11.4 7.4H13.2V11.6H11.4z"/><path d="M1.6 12.6H14.4V14.4H1.6z"/></g></svg>
<div id="t46" class="t" style="left:62.2px;top:844.24px;font-size:12px;line-height:12px;font-weight:400;color:#222;transform:scaleX(0.9152);transform-origin:0 50%;-webkit-text-stroke:0.3px #222;">BANCO TESTE BRUNA</div>
<div id="t47" class="t" style="left:62px;top:861.14px;font-size:12px;line-height:12px;font-weight:400;color:#666;transform:scaleX(0.9619);transform-origin:0 50%;-webkit-text-stroke:0.15px #666;">R$ 4.459,51</div>
<svg class="a" style="left:222px;top:852.8000000000001px;" width="6" height="16" viewBox="0 0 6 16"><g fill="#707070"><circle cx="3" cy="3.6" r="0.95"/><circle cx="3" cy="7.7" r="0.95"/><circle cx="3" cy="11.8" r="0.95"/></g></svg>
<div class="a" style="left:266px;top:234px;width:19px;height:638px;background:#fafafa"></div>
<svg class="a" style="left:268px;top:241px;" width="15" height="9" viewBox="0 0 15 9"><path d="M1 8H14L7.5 1z" fill="#8a8a8a"/></svg>
<div class="a" style="left:270px;top:257px;width:11px;height:99px;border-radius:5.5px;background:#8a8a8a"></div>
<svg class="a" style="left:268px;top:854px;" width="15" height="9" viewBox="0 0 15 9"><path d="M1 1H14L7.5 8z" fill="#8a8a8a"/></svg>
<div class="a" style="left:292px;top:138px;width:1101px;height:760px;background:#fff;border-radius:3px;box-shadow:0 1px 3px rgba(0,0,0,.2)"></div>
<div class="a" style="left:292px;top:177.5px;width:901px;height:1px;background:#dedede"></div>
<div id="t48" class="t" style="left:315.8px;top:153.22px;font-size:11.2px;line-height:11.2px;font-weight:400;color:#555;transform:scaleX(0.9935);transform-origin:0 50%;-webkit-text-stroke:0.3px #555;">CONTAS</div>
<div id="t49" class="t" style="left:395px;top:153.22px;font-size:11.2px;line-height:11.2px;font-weight:400;color:#555;transform:scaleX(1.0083);transform-origin:0 50%;-webkit-text-stroke:0.3px #555;">A PAGAR</div>
<div id="t50" class="t" style="left:477px;top:153.22px;font-size:11.2px;line-height:11.2px;font-weight:400;color:#555;transform:scaleX(0.9571);transform-origin:0 50%;-webkit-text-stroke:0.3px #555;">A RECEBER</div>
<div id="t51" class="t" style="left:571.5px;top:153.22px;font-size:11.2px;line-height:11.2px;font-weight:400;color:#555;transform:scaleX(0.9801);transform-origin:0 50%;-webkit-text-stroke:0.3px #555;">FLUXO DE CAIXA</div>
<div id="t52" class="t" style="left:696px;top:153.22px;font-size:11.2px;line-height:11.2px;font-weight:400;color:#555;transform:scaleX(0.9786);transform-origin:0 50%;-webkit-text-stroke:0.3px #555;">EXTRATOS</div>
<div id="t53" class="t" style="left:787px;top:153.22px;font-size:11.2px;line-height:11.2px;font-weight:400;color:#555;transform:scaleX(0.9920);transform-origin:0 50%;-webkit-text-stroke:0.3px #555;">LIVRO CAIXA</div>
<div class="a" style="left:683.5px;top:176.2px;width:84.5px;height:2px;background:#00bd5e"></div>
<svg class="a" style="left:862.3px;top:152.4px;" width="12" height="12" viewBox="0 0 24 24"><path fill="#555" d="M19 19H5V5h7V3H5c-1.11 0-2 .9-2 2v14c0 1.1.89 2 2 2h14c1.1 0 2-.9 2-2v-7h-2v7zM14 3v2h3.59l-9.83 9.83 1.41 1.41L19 6.41V10h2V3h-7z"/></svg>
<svg class="a" style="left:1200.7px;top:149.2px;" width="18" height="18" viewBox="0 0 24 24"><path fill="#666" d="M17 12h-5v5h5v-5zM16 1v2H8V1H6v2H5c-1.11 0-1.99.9-1.99 2L3 19c0 1.1.89 2 2 2h14c1.1 0 2-.9 2-2V5c0-1.1-.9-2-2-2h-1V1h-2zm3 18H5V8h14v11z"/></svg>
<svg class="a" style="left:1249px;top:153px;" width="12" height="12" viewBox="0 0 12 12"><path d="M7.9 2.8L4.3 6.4L7.9 10" fill="none" stroke="#555" stroke-width="1.2"/></svg>
<svg class="a" style="left:1364px;top:153px;" width="12" height="12" viewBox="0 0 12 12"><path d="M4.1 2.8L7.7 6.4L4.1 10" fill="none" stroke="#555" stroke-width="1.2"/></svg>
<div id="t54" class="t" style="left:1285.4px;top:153.28px;font-size:11.6px;line-height:11.6px;font-weight:400;color:#222;transform:scaleX(0.9736);transform-origin:0 50%;-webkit-text-stroke:0.3px #222;">ABR. 2025</div>
<svg class="a" style="left:305px;top:208px;" width="17" height="13" viewBox="0 0 17 13"><g fill="#666"><rect x="0.9" y="1.3" width="15" height="1.4"/><rect x="3.4" y="5.6" width="10" height="1.4"/><rect x="6.9" y="10" width="3" height="1.4"/></g></svg>
<div id="t55" class="t" style="left:324.6px;top:208.03px;font-size:11.3px;line-height:11.3px;font-weight:400;color:#555;transform:scaleX(0.9600);transform-origin:0 50%;-webkit-text-stroke:0.3px #555;">FILTRAR</div>
<svg class="a" style="left:1299.9px;top:202.8px;" width="17" height="17" viewBox="0 0 24 24"><path fill="#666" d="M15.5 14h-.79l-.28-.27C15.41 12.59 16 11.11 16 9.5 16 5.91 13.09 3 9.5 3S3 5.91 3 9.5 5.91 16 9.5 16c1.61 0 3.09-.59 4.23-1.57l.27.28v.79l5 4.99L20.49 19l-4.99-5zm-6 0C7.01 14 5 11.99 5 9.5S7.01 5 9.5 5 14 7.01 14 9.5 11.99 14 9.5 14z"/></svg>
<svg class="a" style="left:1352.0px;top:203.0px;" width="17" height="17" viewBox="0 0 24 24"><path fill="#666" d="M19 8H5c-1.66 0-3 1.34-3 3v6h4v4h12v-4h4v-6c0-1.66-1.34-3-3-3zm-3 11H8v-5h8v5zm3-7c-.55 0-1-.45-1-1s.45-1 1-1 1 .45 1 1-.45 1-1 1zm-1-9H6v4h12V3z"/></svg>
<div class="a" style="left:959px;top:258px;width:207px;height:71px;background:#fdeaea;border-radius:4px"></div>
<div id="t56" class="t" style="left:401.5px;top:268.17px;font-size:9.6px;line-height:9.6px;font-weight:400;color:#606060;transform:translateX(-50%) scaleX(1.0773);transform-origin:50% 50%;-webkit-text-stroke:0.3px #606060;">SALDO INICIAL (01/04/25)</div>
<div class="a" style="left:303.0px;top:288px;width:197px;height:1px;background:#dedede"></div>
<div class="a" style="left:303.0px;top:328px;width:197px;height:1px;background:#dedede"></div>
<div class="t" id="sv0" style="left:401.5px;top:299.70950000000005px;line-height:17px;transform:translateX(-50%);color:#555"><span style="font-size:11.5px;-webkit-text-stroke:0.25px #555">R$</span> <span style="font-size:17px;-webkit-text-stroke:0.25px #555">-40.078.001,47</span></div>
<div id="t57" class="t" style="left:621.75px;top:268.17px;font-size:9.6px;line-height:9.6px;font-weight:400;color:#606060;transform:translateX(-50%) scaleX(1.0177);transform-origin:50% 50%;-webkit-text-stroke:0.3px #606060;">TOTAL DE ENTRADAS (3)</div>
<div class="a" style="left:523.25px;top:288px;width:197px;height:1px;background:#dedede"></div>
<div class="a" style="left:523.25px;top:328px;width:197px;height:1px;background:#dedede"></div>
<div class="t" id="sv1" style="left:621.75px;top:299.70950000000005px;line-height:17px;transform:translateX(-50%);color:#16b45c"><span style="font-size:11.5px;-webkit-text-stroke:0.25px #16b45c">R$</span> <span style="font-size:17px;-webkit-text-stroke:0.25px #16b45c">2.210,00</span></div>
<div id="t58" class="t" style="left:842.0px;top:268.17px;font-size:9.6px;line-height:9.6px;font-weight:400;color:#606060;transform:translateX(-50%) scaleX(1.0286);transform-origin:50% 50%;-webkit-text-stroke:0.3px #606060;">TOTAL DE SAÍDAS (13)</div>
<div class="a" style="left:743.5px;top:288px;width:197px;height:1px;background:#dedede"></div>
<div class="a" style="left:743.5px;top:328px;width:197px;height:1px;background:#dedede"></div>
<div class="t" id="sv2" style="left:842.0px;top:299.70950000000005px;line-height:17px;transform:translateX(-50%);color:#ee3f35"><span style="font-size:11.5px;-webkit-text-stroke:0.25px #ee3f35">R$</span> <span style="font-size:17px;-webkit-text-stroke:0.25px #ee3f35">-1.587.520,00</span></div>
<div id="t59" class="t" style="left:1062.25px;top:268.17px;font-size:9.6px;line-height:9.6px;font-weight:400;color:#606060;transform:translateX(-50%) scaleX(1.0467);transform-origin:50% 50%;-webkit-text-stroke:0.3px #606060;">EM ATRASO (20)</div>
<div class="a" style="left:963.75px;top:288px;width:197px;height:1px;background:#e6d3d3"></div>
<div class="a" style="left:963.75px;top:328px;width:197px;height:1px;background:#e6d3d3"></div>
<div class="t" id="sv3" style="left:1062.25px;top:299.70950000000005px;line-height:17px;transform:translateX(-50%);color:#555"><span style="font-size:11.5px;-webkit-text-stroke:0.25px #555">R$</span> <span style="font-size:17px;-webkit-text-stroke:0.25px #555">-629.892,47</span></div>
<div id="t60" class="t" style="left:1282.5px;top:268.17px;font-size:9.6px;line-height:9.6px;font-weight:400;color:#606060;transform:translateX(-50%) scaleX(1.0791);transform-origin:50% 50%;-webkit-text-stroke:0.3px #606060;">SALDO FINAL (30/04/25)</div>
<div class="a" style="left:1184.0px;top:288px;width:197px;height:1px;background:#dedede"></div>
<div class="a" style="left:1184.0px;top:328px;width:197px;height:1px;background:#dedede"></div>
<div class="t" id="sv4" style="left:1282.5px;top:299.70950000000005px;line-height:17px;transform:translateX(-50%);color:#555"><span style="font-size:11.5px;-webkit-text-stroke:0.25px #555">R$</span> <span style="font-size:17px;-webkit-text-stroke:0.25px #555">-41.663.311,47</span></div>
<div id="t61" class="t" style="left:309.9px;top:365.14px;font-size:10px;line-height:10px;font-weight:700;color:#222;transform:scaleX(0.8991);transform-origin:0 50%;">Data</div>
<svg class="a" style="left:339px;top:364px;" width="12" height="12" viewBox="0 0 12 12"><path d="M6 1.4V11M1.8 5.6L6 1.4L10.2 5.6" fill="none" stroke="#222" stroke-width="1.3"/></svg>
<div id="t62" class="t" style="left:410px;top:365.17px;font-size:10.2px;line-height:10.2px;font-weight:400;color:#666;transform:scaleX(0.9666);transform-origin:0 50%;-webkit-text-stroke:0.35px #666;">Conta bancária</div>
<div id="t63" class="t" style="left:648.3px;top:365.17px;font-size:10.2px;line-height:10.2px;font-weight:400;color:#666;transform:scaleX(0.9946);transform-origin:0 50%;-webkit-text-stroke:0.35px #666;">Origem/Destino</div>
<div id="t64" class="t" style="left:852px;top:365.17px;font-size:10.2px;line-height:10.2px;font-weight:400;color:#666;transform:scaleX(0.9888);transform-origin:0 50%;-webkit-text-stroke:0.35px #666;">Produtos / Descrição</div>
<div id="t65" class="t" style="left:1126.2px;top:365.17px;font-size:10.2px;line-height:10.2px;font-weight:400;color:#666;transform:translateX(-100%) scaleX(0.9722);transform-origin:100% 50%;-webkit-text-stroke:0.35px #666;">Valor (R$)</div>
<div id="t66" class="t" style="left:1248.7px;top:365.17px;font-size:10.2px;line-height:10.2px;font-weight:400;color:#666;transform:translateX(-100%) scaleX(0.9527);transform-origin:100% 50%;-webkit-text-stroke:0.35px #666;">Saldo (R$)</div>
<div id="t67" class="t" style="left:1271.2px;top:365.17px;font-size:10.2px;line-height:10.2px;font-weight:400;color:#666;transform:scaleX(0.9371);transform-origin:0 50%;-webkit-text-stroke:0.35px #666;">Pago</div>
<div id="t68" class="t" style="left:1301.7px;top:365.17px;font-size:10.2px;line-height:10.2px;font-weight:400;color:#666;transform:scaleX(0.9900);transform-origin:0 50%;-webkit-text-stroke:0.35px #666;">Conciliado</div>
<svg class="a" style="left:1368px;top:362px;" width="8" height="16" viewBox="0 0 8 16"><g fill="#444"><circle cx="4" cy="3" r="1.7"/><circle cx="4" cy="8" r="1.7"/><circle cx="4" cy="13" r="1.7"/></g></svg>
<div class="a" style="left:292px;top:393px;width:1101px;height:1px;background:#dedede"></div>
<div class="a" style="left:292px;top:442px;width:1101px;height:1px;background:#e0e0e0"></div>
<div id="t69" class="t" style="left:309.9px;top:412.87px;font-size:11.5px;line-height:11.5px;font-weight:400;color:#222;transform:scaleX(1.0052);transform-origin:0 50%;">01/04/25</div>
<svg class="a" style="left:379.0px;top:411.5px;" width="13" height="13" viewBox="0 0 24 24"><path fill="#707070" d="M6.99 11L3 15l3.99 4v-3H14v-2H6.99v-3zM21 9l-3.99-4v3H10v2h7.01v3L21 9z"/></svg>
<div id="t70" class="t" style="left:409.8px;top:413.29px;font-size:11px;line-height:11px;font-weight:700;color:#222;transform:scaleX(1.0000);transform-origin:0 50%;letter-spacing:-0.45px;">Banco Investimentos</div>
<svg class="a" style="left:603.5px;top:409.5px;" width="16" height="16" viewBox="0 0 16 16"><path d="M14.6 8H2.4M8.2 2.2L2.4 8L8.2 13.8" fill="none" stroke="#00b85c" stroke-width="1.7"/></svg>
<div id="t71" class="t" style="left:648.3px;top:403.94px;font-size:12px;line-height:12px;font-weight:400;color:#222;transform:scaleX(1.0000);transform-origin:0 50%;letter-spacing:-0.07px;">Banco Douglas recebimento</div>
<div id="t72" class="t" style="left:648.3px;top:420.84px;font-size:12px;line-height:12px;font-weight:400;color:#222;transform:scaleX(1.0000);transform-origin:0 50%;letter-spacing:-0.07px;">terceiros</div>
<div id="t73" class="t" style="left:852px;top:412.79px;font-size:11px;line-height:11px;font-weight:400;color:#222;transform:scaleX(1.0000);transform-origin:0 50%;letter-spacing:-0.45px;">-</div>
<div id="t74" class="t" style="left:1126.2px;top:413.19px;font-size:11px;line-height:11px;font-weight:700;color:#16b45c;transform:translateX(-100%) scaleX(1.0000);transform-origin:100% 50%;">10,00</div>
<div id="t75" class="t" style="left:1248.7px;top:413.53px;font-size:10.6px;line-height:10.6px;font-weight:400;color:#222;transform:translateX(-100%) scaleX(1.0000);transform-origin:100% 50%;">-40.077.991,47</div>
<svg class="a" style="left:1273.8px;top:409.3px;" width="17.4" height="17.4" viewBox="0 0 24 24"><path fill="#6b6b6b" d="M12 2C6.48 2 2 6.48 2 12s4.48 10 10 10 10-4.48 10-10S17.52 2 12 2zm-2 15l-5-5 1.41-1.41L10 14.17l7.59-7.59L19 8l-9 9z"/></svg>
<svg class="a" style="left:1316.3px;top:409.3px;" width="17.4" height="17.4" viewBox="0 0 24 24"><path fill="#00c061" d="M12 2C6.48 2 2 6.48 2 12s4.48 10 10 10 10-4.48 10-10S17.52 2 12 2zm-2 15l-5-5 1.41-1.41L10 14.17l7.59-7.59L19 8l-9 9z"/></svg>
<svg class="a" style="left:1368px;top:410.0px;" width="8" height="16" viewBox="0 0 8 16"><g fill="#505050"><circle cx="4" cy="2.4" r="1.65"/><circle cx="4" cy="7.6" r="1.65"/><circle cx="4" cy="12.8" r="1.65"/></g></svg>
<div class="a" style="left:292px;top:486px;width:1101px;height:1px;background:#e8d4d4"></div>
<div id="t76" class="t" style="left:309.9px;top:459.37px;font-size:11.5px;line-height:11.5px;font-weight:400;color:#222;transform:scaleX(1.0052);transform-origin:0 50%;">01/04/25</div>
<svg class="a" style="left:379.0px;top:458.0px;" width="13" height="13" viewBox="0 0 24 24"><path fill="#707070" d="M6.99 11L3 15l3.99 4v-3H14v-2H6.99v-3zM21 9l-3.99-4v3H10v2h7.01v3L21 9z"/></svg>
<div id="t77" class="t" style="left:409.8px;top:454.09px;font-size:11px;line-height:11px;font-weight:700;color:#222;transform:scaleX(1.0000);transform-origin:0 50%;letter-spacing:-0.45px;">Banco Douglas recebimento</div>
<div id="t78" class="t" style="left:409.8px;top:467.49px;font-size:11px;line-height:11px;font-weight:700;color:#222;transform:scaleX(1.0000);transform-origin:0 50%;letter-spacing:-0.45px;">terceiros</div>
<svg class="a" style="left:602.8px;top:456.7px;" width="16" height="16" viewBox="0 0 16 16"><path d="M1.4 8H13.6M7.8 2.2L13.6 8L7.8 13.8" fill="none" stroke="#f0443a" stroke-width="1.6"/></svg>
<div id="t79" class="t" style="left:648.3px;top:458.34px;font-size:12px;line-height:12px;font-weight:400;color:#222;transform:scaleX(1.0000);transform-origin:0 50%;letter-spacing:-0.07px;">Banco Investimentos</div>
<div id="t80" class="t" style="left:852px;top:459.29px;font-size:11px;line-height:11px;font-weight:400;color:#222;transform:scaleX(1.0000);transform-origin:0 50%;letter-spacing:-0.45px;">-</div>
<div id="t81" class="t" style="left:1126.2px;top:459.69px;font-size:11px;line-height:11px;font-weight:700;color:#ee3f35;transform:translateX(-100%) scaleX(1.0000);transform-origin:100% 50%;">-10,00</div>
<div id="t82" class="t" style="left:1248.7px;top:460.03px;font-size:10.6px;line-height:10.6px;font-weight:400;color:#222;transform:translateX(-100%) scaleX(1.0000);transform-origin:100% 50%;">-40.078.001,47</div>
<svg class="a" style="left:1273.8px;top:455.8px;" width="17.4" height="17.4" viewBox="0 0 24 24"><path fill="#6b6b6b" d="M12 2C6.48 2 2 6.48 2 12s4.48 10 10 10 10-4.48 10-10S17.52 2 12 2zm-2 15l-5-5 1.41-1.41L10 14.17l7.59-7.59L19 8l-9 9z"/></svg>
<svg class="a" style="left:1316.3px;top:455.8px;" width="17.4" height="17.4" viewBox="0 0 24 24"><path fill="#00c061" d="M12 2C6.48 2 2 6.48 2 12s4.48 10 10 10 10-4.48 10-10S17.52 2 12 2zm-2 15l-5-5 1.41-1.41L10 14.17l7.59-7.59L19 8l-9 9z"/></svg>
<svg class="a" style="left:1368px;top:456.5px;" width="8" height="16" viewBox="0 0 8 16"><g fill="#505050"><circle cx="4" cy="2.4" r="1.65"/><circle cx="4" cy="7.6" r="1.65"/><circle cx="4" cy="12.8" r="1.65"/></g></svg>
<div class="a" style="left:292px;top:487px;width:1101px;height:39px;background:#fdeaea"></div>
<div class="a" style="left:292px;top:526px;width:1101px;height:1px;background:#e0e0e0"></div>
<div id="t83" class="t" style="left:309.9px;top:501.37px;font-size:11.5px;line-height:11.5px;font-weight:400;color:#777;transform:scaleX(1.0052);transform-origin:0 50%;">01/04/25</div>
<svg class="a" style="left:379.0px;top:500.0px;" width="13" height="13" viewBox="0 0 24 24"><path fill="#707070" transform="translate(24 0) scale(-1 1)" d="M19 14V6c0-1.1-.9-2-2-2H3c-1.1 0-2 .9-2 2v8c0 1.1.9 2 2 2h14c1.1 0 2-.9 2-2zm-2 0H3V6h14v8zm-7-7c-1.66 0-3 1.34-3 3s1.34 3 3 3 3-1.34 3-3-1.34-3-3-3zm13 0v11c0 1.1-.9 2-2 2H4v-2h17V7h2z"/></svg>
<div id="t84" class="t" style="left:409.8px;top:501.79px;font-size:11px;line-height:11px;font-weight:700;color:#777;transform:scaleX(1.0000);transform-origin:0 50%;letter-spacing:-0.45px;">Banco Douglas</div>
<svg class="a" style="left:602.8px;top:498.7px;" width="16" height="16" viewBox="0 0 16 16"><path d="M1.4 8H13.6M7.8 2.2L13.6 8L7.8 13.8" fill="none" stroke="#f0443a" stroke-width="1.6"/></svg>
<div id="t85" class="t" style="left:648.3px;top:500.34px;font-size:12px;line-height:12px;font-weight:400;color:#777;transform:scaleX(1.0000);transform-origin:0 50%;letter-spacing:-0.07px;">-</div>
<div id="t86" class="t" style="left:852px;top:501.29px;font-size:11px;line-height:11px;font-weight:400;color:#777;transform:scaleX(1.0000);transform-origin:0 50%;letter-spacing:-0.45px;">-</div>
<div id="t87" class="t" style="left:1126.2px;top:501.69px;font-size:11px;line-height:11px;font-weight:700;color:#ee3f35;transform:translateX(-100%) scaleX(1.0000);transform-origin:100% 50%;">-224.719,10</div>
<div id="t88" class="t" style="left:1248.7px;top:502.03px;font-size:10.6px;line-height:10.6px;font-weight:400;color:#777;transform:translateX(-100%) scaleX(1.0000);transform-origin:100% 50%;">-40.078.001,47</div>
<svg class="a" style="left:1274.5px;top:498.5px;" width="16" height="16" viewBox="0 0 16 16"><circle cx="8" cy="8" r="6.6" fill="none" stroke="#666" stroke-width="1.4"/></svg>
<svg class="a" style="left:1317px;top:498.5px;" width="16" height="16" viewBox="0 0 16 16"><circle cx="8" cy="8" r="6.6" fill="none" stroke="#666" stroke-width="1.4"/></svg>
<svg class="a" style="left:1368px;top:498.5px;" width="8" height="16" viewBox="0 0 8 16"><g fill="#505050"><circle cx="4" cy="2.4" r="1.65"/><circle cx="4" cy="7.6" r="1.65"/><circle cx="4" cy="12.8" r="1.65"/></g></svg>
<div class="a" style="left:292px;top:566px;width:1101px;height:1px;background:#e0e0e0"></div>
<div id="t89" class="t" style="left:309.9px;top:541.37px;font-size:11.5px;line-height:11.5px;font-weight:400;color:#222;transform:scaleX(1.0052);transform-origin:0 50%;">02/04/25</div>
<svg class="a" style="left:379.0px;top:540.0px;" width="13" height="13" viewBox="0 0 24 24"><path fill="#707070" d="M19.77 7.23l.01-.01-3.72-3.72L15 4.56l2.11 2.11c-.94.36-1.61 1.26-1.61 2.33 0 1.38 1.12 2.5 2.5 2.5.36 0 .69-.08 1-.21v7.21c0 .55-.45 1-1 1s-1-.45-1-1V14c0-1.1-.9-2-2-2h-1V5c0-1.1-.9-2-2-2H6c-1.1 0-2 .9-2 2v16h10v-7.5h1.5v5c0 1.38 1.12 2.5 2.5 2.5s2.5-1.12 2.5-2.5V9c0-.69-.28-1.32-.73-1.77zM12 10H6V5h6v5z"/></svg>
<div id="t90" class="t" style="left:409.8px;top:541.79px;font-size:11px;line-height:11px;font-weight:700;color:#222;transform:scaleX(1.0000);transform-origin:0 50%;letter-spacing:-0.45px;">Cheques Banco do Brasil</div>
<svg class="a" style="left:602.8px;top:538.7px;" width="16" height="16" viewBox="0 0 16 16"><path d="M1.4 8H13.6M7.8 2.2L13.6 8L7.8 13.8" fill="none" stroke="#f0443a" stroke-width="1.6"/></svg>
<div id="t91" class="t" style="left:648.3px;top:540.34px;font-size:12px;line-height:12px;font-weight:400;color:#222;transform:scaleX(1.0000);transform-origin:0 50%;letter-spacing:-0.45px;">AEGRO INFORMATICA LIMITADA</div>
<div id="t92" class="t" style="left:852px;top:541.29px;font-size:11px;line-height:11px;font-weight:400;color:#222;transform:scaleX(1.0000);transform-origin:0 50%;letter-spacing:-0.45px;">-</div>
<div id="t93" class="t" style="left:1126.2px;top:541.69px;font-size:11px;line-height:11px;font-weight:700;color:#ee3f35;transform:translateX(-100%) scaleX(1.0000);transform-origin:100% 50%;">-600,00</div>
<div id="t94" class="t" style="left:1248.7px;top:542.03px;font-size:10.6px;line-height:10.6px;font-weight:400;color:#222;transform:translateX(-100%) scaleX(1.0000);transform-origin:100% 50%;">-40.078.601,47</div>
<svg class="a" style="left:1273.8px;top:537.8px;" width="17.4" height="17.4" viewBox="0 0 24 24"><path fill="#00c061" d="M12 2C6.48 2 2 6.48 2 12s4.48 10 10 10 10-4.48 10-10S17.52 2 12 2zm-2 15l-5-5 1.41-1.41L10 14.17l7.59-7.59L19 8l-9 9z"/></svg>
<svg class="a" style="left:1317px;top:538.5px;" width="16" height="16" viewBox="0 0 16 16"><circle cx="8" cy="8" r="6.6" fill="none" stroke="#666" stroke-width="1.4"/></svg>
<svg class="a" style="left:1368px;top:538.5px;" width="8" height="16" viewBox="0 0 8 16"><g fill="#505050"><circle cx="4" cy="2.4" r="1.65"/><circle cx="4" cy="7.6" r="1.65"/><circle cx="4" cy="12.8" r="1.65"/></g></svg>
<div class="a" style="left:292px;top:606px;width:1101px;height:1px;background:#e8d4d4"></div>
<div id="t95" class="t" style="left:309.9px;top:581.37px;font-size:11.5px;line-height:11.5px;font-weight:400;color:#222;transform:scaleX(1.0052);transform-origin:0 50%;">02/04/25</div>
<svg class="a" style="left:379.0px;top:580.0px;" width="13" height="13" viewBox="0 0 24 24"><path fill="#707070" d="M13 11.33L18 18H6l5-6.67V6h2v5.33zM15.96 4H8.04c-.42 0-.65.48-.39.81L9 6.5v4.17L3.2 18.4c-.49.66-.02 1.6.8 1.6h16c.82 0 1.29-.94.8-1.6L15 10.67V6.5l1.35-1.69c.26-.33.03-.81-.39-.81z M8.2 16.4h7.6l-1.6-2.2H9.8z"/></svg>
<div id="t96" class="t" style="left:409.8px;top:581.79px;font-size:11px;line-height:11px;font-weight:700;color:#222;transform:scaleX(1.0000);transform-origin:0 50%;letter-spacing:-0.45px;">Conta Teste</div>
<svg class="a" style="left:602.8px;top:578.7px;" width="16" height="16" viewBox="0 0 16 16"><path d="M1.4 8H13.6M7.8 2.2L13.6 8L7.8 13.8" fill="none" stroke="#f0443a" stroke-width="1.6"/></svg>
<div id="t97" class="t" style="left:648.3px;top:580.34px;font-size:12px;line-height:12px;font-weight:400;color:#222;transform:scaleX(1.0000);transform-origin:0 50%;letter-spacing:-0.07px;">Aegro</div>
<div id="t98" class="t" style="left:852px;top:581.29px;font-size:11px;line-height:11px;font-weight:400;color:#222;transform:scaleX(1.0000);transform-origin:0 50%;letter-spacing:-0.45px;">00-30-15</div>
<div id="t99" class="t" style="left:1126.2px;top:581.69px;font-size:11px;line-height:11px;font-weight:700;color:#ee3f35;transform:translateX(-100%) scaleX(1.0000);transform-origin:100% 50%;">-400.000,00</div>
<div id="t100" class="t" style="left:1248.7px;top:582.03px;font-size:10.6px;line-height:10.6px;font-weight:400;color:#222;transform:translateX(-100%) scaleX(1.0000);transform-origin:100% 50%;">-40.478.601,47</div>
<svg class="a" style="left:1273.8px;top:577.8px;" width="17.4" height="17.4" viewBox="0 0 24 24"><path fill="#6b6b6b" d="M12 2C6.48 2 2 6.48 2 12s4.48 10 10 10 10-4.48 10-10S17.52 2 12 2zm-2 15l-5-5 1.41-1.41L10 14.17l7.59-7.59L19 8l-9 9z"/></svg>
<svg class="a" style="left:1316.3px;top:577.8px;" width="17.4" height="17.4" viewBox="0 0 24 24"><path fill="#00c061" d="M12 2C6.48 2 2 6.48 2 12s4.48 10 10 10 10-4.48 10-10S17.52 2 12 2zm-2 15l-5-5 1.41-1.41L10 14.17l7.59-7.59L19 8l-9 9z"/></svg>
<svg class="a" style="left:1368px;top:578.5px;" width="8" height="16" viewBox="0 0 8 16"><g fill="#505050"><circle cx="4" cy="2.4" r="1.65"/><circle cx="4" cy="7.6" r="1.65"/><circle cx="4" cy="12.8" r="1.65"/></g></svg>
<div class="a" style="left:292px;top:607px;width:1101px;height:39px;background:#fdeaea"></div>
<div class="a" style="left:292px;top:646px;width:1101px;height:1px;background:#e0e0e0"></div>
<div id="t101" class="t" style="left:309.9px;top:621.37px;font-size:11.5px;line-height:11.5px;font-weight:400;color:#777;transform:scaleX(1.0052);transform-origin:0 50%;">02/04/25</div>
<svg class="a" style="left:379.0px;top:620.0px;" width="13" height="13" viewBox="0 0 24 24"><path fill="#707070" d="M13 11.33L18 18H6l5-6.67V6h2v5.33zM15.96 4H8.04c-.42 0-.65.48-.39.81L9 6.5v4.17L3.2 18.4c-.49.66-.02 1.6.8 1.6h16c.82 0 1.29-.94.8-1.6L15 10.67V6.5l1.35-1.69c.26-.33.03-.81-.39-.81z M8.2 16.4h7.6l-1.6-2.2H9.8z"/></svg>
<div id="t102" class="t" style="left:409.8px;top:621.79px;font-size:11px;line-height:11px;font-weight:700;color:#777;transform:scaleX(1.0000);transform-origin:0 50%;letter-spacing:-0.45px;">Conta Teste</div>
<svg class="a" style="left:602.8px;top:618.7px;" width="16" height="16" viewBox="0 0 16 16"><path d="M1.4 8H13.6M7.8 2.2L13.6 8L7.8 13.8" fill="none" stroke="#f0443a" stroke-width="1.6"/></svg>
<div id="t103" class="t" style="left:648.3px;top:620.34px;font-size:12px;line-height:12px;font-weight:400;color:#777;transform:scaleX(1.0000);transform-origin:0 50%;letter-spacing:-0.45px;">ADM DO BRASIL LTDA</div>
<div id="t104" class="t" style="left:852px;top:621.29px;font-size:11px;line-height:11px;font-weight:400;color:#777;transform:scaleX(1.0000);transform-origin:0 50%;letter-spacing:-0.45px;">02-20-20</div>
<div id="t105" class="t" style="left:1126.2px;top:621.69px;font-size:11px;line-height:11px;font-weight:700;color:#ee3f35;transform:translateX(-100%) scaleX(1.0000);transform-origin:100% 50%;">-400.000,00</div>
<div id="t106" class="t" style="left:1248.7px;top:622.03px;font-size:10.6px;line-height:10.6px;font-weight:400;color:#777;transform:translateX(-100%) scaleX(1.0000);transform-origin:100% 50%;">-40.478.601,47</div>
<svg class="a" style="left:1274.5px;top:618.5px;" width="16" height="16" viewBox="0 0 16 16"><circle cx="8" cy="8" r="6.6" fill="none" stroke="#666" stroke-width="1.4"/></svg>
<svg class="a" style="left:1317px;top:618.5px;" width="16" height="16" viewBox="0 0 16 16"><circle cx="8" cy="8" r="6.6" fill="none" stroke="#666" stroke-width="1.4"/></svg>
<svg class="a" style="left:1368px;top:618.5px;" width="8" height="16" viewBox="0 0 8 16"><g fill="#505050"><circle cx="4" cy="2.4" r="1.65"/><circle cx="4" cy="7.6" r="1.65"/><circle cx="4" cy="12.8" r="1.65"/></g></svg>
<div class="a" style="left:292px;top:688px;width:1101px;height:1px;background:#e8d4d4"></div>
<div id="t107" class="t" style="left:309.9px;top:662.37px;font-size:11.5px;line-height:11.5px;font-weight:400;color:#222;transform:scaleX(1.0052);transform-origin:0 50%;">03/04/25</div>
<svg class="a" style="left:379.0px;top:661.0px;" width="13" height="13" viewBox="0 0 24 24"><path fill="#707070" transform="translate(24 0) scale(-1 1)" d="M19 14V6c0-1.1-.9-2-2-2H3c-1.1 0-2 .9-2 2v8c0 1.1.9 2 2 2h14c1.1 0 2-.9 2-2zm-2 0H3V6h14v8zm-7-7c-1.66 0-3 1.34-3 3s1.34 3 3 3 3-1.34 3-3-1.34-3-3-3zm13 0v11c0 1.1-.9 2-2 2H4v-2h17V7h2z"/></svg>
<div id="t108" class="t" style="left:409.8px;top:662.79px;font-size:11px;line-height:11px;font-weight:700;color:#222;transform:scaleX(1.0000);transform-origin:0 50%;letter-spacing:-0.45px;">Banco Douglas</div>
<svg class="a" style="left:602.8px;top:659.7px;" width="16" height="16" viewBox="0 0 16 16"><path d="M1.4 8H13.6M7.8 2.2L13.6 8L7.8 13.8" fill="none" stroke="#f0443a" stroke-width="1.6"/></svg>
<div id="t109" class="t" style="left:648.3px;top:661.34px;font-size:12px;line-height:12px;font-weight:400;color:#222;transform:scaleX(1.0000);transform-origin:0 50%;letter-spacing:-0.45px;">143 - POA - AV. BRASIL - RS</div>
<div id="t110" class="t" style="left:852px;top:656.79px;font-size:11px;line-height:11px;font-weight:400;color:#222;transform:scaleX(1.0000);transform-origin:0 50%;letter-spacing:-0.45px;">BATERIA 105A, BATERIA</div>
<div id="t111" class="t" style="left:852px;top:669.49px;font-size:11px;line-height:11px;font-weight:400;color:#222;transform:scaleX(1.0000);transform-origin:0 50%;letter-spacing:-0.45px;">105A</div>
<div id="t112" class="t" style="left:1126.2px;top:662.69px;font-size:11px;line-height:11px;font-weight:700;color:#ee3f35;transform:translateX(-100%) scaleX(1.0000);transform-origin:100% 50%;">-200,00</div>
<div id="t113" class="t" style="left:1248.7px;top:663.03px;font-size:10.6px;line-height:10.6px;font-weight:400;color:#222;transform:translateX(-100%) scaleX(1.0000);transform-origin:100% 50%;">-40.478.801,47</div>
<svg class="a" style="left:1273.8px;top:658.8px;" width="17.4" height="17.4" viewBox="0 0 24 24"><path fill="#00c061" d="M12 2C6.48 2 2 6.48 2 12s4.48 10 10 10 10-4.48 10-10S17.52 2 12 2zm-2 15l-5-5 1.41-1.41L10 14.17l7.59-7.59L19 8l-9 9z"/></svg>
<svg class="a" style="left:1317px;top:659.5px;" width="16" height="16" viewBox="0 0 16 16"><circle cx="8" cy="8" r="6.6" fill="none" stroke="#666" stroke-width="1.4"/></svg>
<svg class="a" style="left:1368px;top:659.5px;" width="8" height="16" viewBox="0 0 8 16"><g fill="#505050"><circle cx="4" cy="2.4" r="1.65"/><circle cx="4" cy="7.6" r="1.65"/><circle cx="4" cy="12.8" r="1.65"/></g></svg>
<div class="a" style="left:292px;top:689px;width:1101px;height:39px;background:#fdeaea"></div>
<div class="a" style="left:292px;top:728px;width:1101px;height:1px;background:#e0e0e0"></div>
<div id="t114" class="t" style="left:309.9px;top:703.37px;font-size:11.5px;line-height:11.5px;font-weight:400;color:#777;transform:scaleX(1.0052);transform-origin:0 50%;">03/04/25</div>
<svg class="a" style="left:379.0px;top:702.0px;" width="13" height="13" viewBox="0 0 24 24"><path fill="#707070" d="M19.77 7.23l.01-.01-3.72-3.72L15 4.56l2.11 2.11c-.94.36-1.61 1.26-1.61 2.33 0 1.38 1.12 2.5 2.5 2.5.36 0 .69-.08 1-.21v7.21c0 .55-.45 1-1 1s-1-.45-1-1V14c0-1.1-.9-2-2-2h-1V5c0-1.1-.9-2-2-2H6c-1.1 0-2 .9-2 2v16h10v-7.5h1.5v5c0 1.38 1.12 2.5 2.5 2.5s2.5-1.12 2.5-2.5V9c0-.69-.28-1.32-.73-1.77zM12 10H6V5h6v5z"/></svg>
<div id="t115" class="t" style="left:409.8px;top:703.79px;font-size:11px;line-height:11px;font-weight:700;color:#777;transform:scaleX(1.0000);transform-origin:0 50%;letter-spacing:-0.45px;">Banco Douglas</div>
<svg class="a" style="left:602.8px;top:700.7px;" width="16" height="16" viewBox="0 0 16 16"><path d="M1.4 8H13.6M7.8 2.2L13.6 8L7.8 13.8" fill="none" stroke="#f0443a" stroke-width="1.6"/></svg>
<div id="t116" class="t" style="left:648.3px;top:702.34px;font-size:12px;line-height:12px;font-weight:400;color:#777;transform:scaleX(1.0000);transform-origin:0 50%;letter-spacing:-0.07px;">-</div>
<div id="t117" class="t" style="left:852px;top:703.29px;font-size:11px;line-height:11px;font-weight:400;color:#777;transform:scaleX(1.0000);transform-origin:0 50%;letter-spacing:-0.45px;">ABASTECIMENTO</div>
<div id="t118" class="t" style="left:1126.2px;top:703.69px;font-size:11px;line-height:11px;font-weight:700;color:#ee3f35;transform:translateX(-100%) scaleX(1.0000);transform-origin:100% 50%;">-5,50</div>
<div id="t119" class="t" style="left:1248.7px;top:704.03px;font-size:10.6px;line-height:10.6px;font-weight:400;color:#777;transform:translateX(-100%) scaleX(1.0000);transform-origin:100% 50%;">-40.478.801,47</div>
<svg class="a" style="left:1274.5px;top:700.5px;" width="16" height="16" viewBox="0 0 16 16"><circle cx="8" cy="8" r="6.6" fill="none" stroke="#666" stroke-width="1.4"/></svg>
<svg class="a" style="left:1317px;top:700.5px;" width="16" height="16" viewBox="0 0 16 16"><circle cx="8" cy="8" r="6.6" fill="none" stroke="#666" stroke-width="1.4"/></svg>
<svg class="a" style="left:1368px;top:700.5px;" width="8" height="16" viewBox="0 0 8 16"><g fill="#505050"><circle cx="4" cy="2.4" r="1.65"/><circle cx="4" cy="7.6" r="1.65"/><circle cx="4" cy="12.8" r="1.65"/></g></svg>
<div class="a" style="left:292px;top:768px;width:1101px;height:1px;background:#e8d4d4"></div>
<div id="t120" class="t" style="left:309.9px;top:743.37px;font-size:11.5px;line-height:11.5px;font-weight:400;color:#222;transform:scaleX(1.0052);transform-origin:0 50%;">04/04/25</div>
<svg class="a" style="left:379.0px;top:742.0px;" width="13" height="13" viewBox="0 0 24 24"><path fill="#707070" d="M19.77 7.23l.01-.01-3.72-3.72L15 4.56l2.11 2.11c-.94.36-1.61 1.26-1.61 2.33 0 1.38 1.12 2.5 2.5 2.5.36 0 .69-.08 1-.21v7.21c0 .55-.45 1-1 1s-1-.45-1-1V14c0-1.1-.9-2-2-2h-1V5c0-1.1-.9-2-2-2H6c-1.1 0-2 .9-2 2v16h10v-7.5h1.5v5c0 1.38 1.12 2.5 2.5 2.5s2.5-1.12 2.5-2.5V9c0-.69-.28-1.32-.73-1.77zM12 10H6V5h6v5z"/></svg>
<div id="t121" class="t" style="left:409.8px;top:743.79px;font-size:11px;line-height:11px;font-weight:700;color:#222;transform:scaleX(1.0000);transform-origin:0 50%;letter-spacing:-0.45px;">Cheques Banco do Brasil</div>
<svg class="a" style="left:602.8px;top:740.7px;" width="16" height="16" viewBox="0 0 16 16"><path d="M1.4 8H13.6M7.8 2.2L13.6 8L7.8 13.8" fill="none" stroke="#f0443a" stroke-width="1.6"/></svg>
<div id="t122" class="t" style="left:648.3px;top:742.34px;font-size:12px;line-height:12px;font-weight:400;color:#222;transform:scaleX(1.0000);transform-origin:0 50%;letter-spacing:-0.45px;">AEGRO INFORMATICA LIMITADA</div>
<div id="t123" class="t" style="left:852px;top:743.29px;font-size:11px;line-height:11px;font-weight:400;color:#222;transform:scaleX(1.0000);transform-origin:0 50%;letter-spacing:-0.45px;">-</div>
<div id="t124" class="t" style="left:1126.2px;top:743.69px;font-size:11px;line-height:11px;font-weight:700;color:#ee3f35;transform:translateX(-100%) scaleX(1.0000);transform-origin:100% 50%;">-200,00</div>
<div id="t125" class="t" style="left:1248.7px;top:744.03px;font-size:10.6px;line-height:10.6px;font-weight:400;color:#222;transform:translateX(-100%) scaleX(1.0000);transform-origin:100% 50%;">-40.479.001,47</div>
<svg class="a" style="left:1273.8px;top:739.8px;" width="17.4" height="17.4" viewBox="0 0 24 24"><path fill="#00c061" d="M12 2C6.48 2 2 6.48 2 12s4.48 10 10 10 10-4.48 10-10S17.52 2 12 2zm-2 15l-5-5 1.41-1.41L10 14.17l7.59-7.59L19 8l-9 9z"/></svg>
<svg class="a" style="left:1317px;top:740.5px;" width="16" height="16" viewBox="0 0 16 16"><circle cx="8" cy="8" r="6.6" fill="none" stroke="#666" stroke-width="1.4"/></svg>
<svg class="a" style="left:1368px;top:740.5px;" width="8" height="16" viewBox="0 0 8 16"><g fill="#505050"><circle cx="4" cy="2.4" r="1.65"/><circle cx="4" cy="7.6" r="1.65"/><circle cx="4" cy="12.8" r="1.65"/></g></svg>
<div class="a" style="left:292px;top:769px;width:1101px;height:39px;background:#fdeaea"></div>
<div class="a" style="left:292px;top:808px;width:1101px;height:1px;background:#e0e0e0"></div>
<div id="t126" class="t" style="left:309.9px;top:783.37px;font-size:11.5px;line-height:11.5px;font-weight:400;color:#777;transform:scaleX(1.0052);transform-origin:0 50%;">04/04/25</div>
<svg class="a" style="left:379.0px;top:782.0px;" width="13" height="13" viewBox="0 0 24 24"><path fill="#707070" d="M12 15.2c-2.8 0-7.6 1.3-7.6 3.9V21h15.2v-1.9c0-2.6-4.8-3.9-7.6-3.9z M8.6 11.2h6.8a3.4 3.4 0 0 1-6.8 0z M7 9.4h10v1.2H7z M8.4 9.2c0-2 1.6-3.6 3.6-3.6s3.6 1.6 3.6 3.6z M11.3 1.6h1.4v1.6h1.6v1.4h-1.6v1.4h-1.4V4.6H9.7V3.2h1.6z"/></svg>
<div id="t127" class="t" style="left:409.8px;top:783.79px;font-size:11px;line-height:11px;font-weight:700;color:#777;transform:scaleX(1.0000);transform-origin:0 50%;letter-spacing:-0.45px;">Banco Douglas</div>
<svg class="a" style="left:602.8px;top:780.7px;" width="16" height="16" viewBox="0 0 16 16"><path d="M1.4 8H13.6M7.8 2.2L13.6 8L7.8 13.8" fill="none" stroke="#f0443a" stroke-width="1.6"/></svg>
<div id="t128" class="t" style="left:648.3px;top:782.34px;font-size:12px;line-height:12px;font-weight:400;color:#777;transform:scaleX(1.0000);transform-origin:0 50%;letter-spacing:-0.45px;">COPLACANA - PIRACICABA</div>
<div id="t129" class="t" style="left:852px;top:783.29px;font-size:11px;line-height:11px;font-weight:400;color:#777;transform:scaleX(1.0000);transform-origin:0 50%;letter-spacing:-0.45px;">-</div>
<div id="t130" class="t" style="left:1126.2px;top:783.69px;font-size:11px;line-height:11px;font-weight:700;color:#ee3f35;transform:translateX(-100%) scaleX(1.0000);transform-origin:100% 50%;">-2.000,00</div>
<div id="t131" class="t" style="left:1248.7px;top:784.03px;font-size:10.6px;line-height:10.6px;font-weight:400;color:#777;transform:translateX(-100%) scaleX(1.0000);transform-origin:100% 50%;">-40.479.001,47</div>
<svg class="a" style="left:1274.5px;top:780.5px;" width="16" height="16" viewBox="0 0 16 16"><circle cx="8" cy="8" r="6.6" fill="none" stroke="#666" stroke-width="1.4"/></svg>
<svg class="a" style="left:1317px;top:780.5px;" width="16" height="16" viewBox="0 0 16 16"><circle cx="8" cy="8" r="6.6" fill="none" stroke="#666" stroke-width="1.4"/></svg>
<svg class="a" style="left:1368px;top:780.5px;" width="8" height="16" viewBox="0 0 8 16"><g fill="#505050"><circle cx="4" cy="2.4" r="1.65"/><circle cx="4" cy="7.6" r="1.65"/><circle cx="4" cy="12.8" r="1.65"/></g></svg>
<div id="t132" class="t" style="left:914.8px;top:827.97px;font-size:10.2px;line-height:10.2px;font-weight:400;color:#777;transform:scaleX(0.9390);transform-origin:0 50%;">Página</div>
<div id="t133" class="t" style="left:978.7px;top:827.97px;font-size:10.2px;line-height:10.2px;font-weight:400;color:#777;transform:scaleX(1.0000);transform-origin:0 50%;">1</div>
<svg class="a" style="left:989px;top:829px;" width="10" height="6" viewBox="0 0 10 6"><path d="M1 1H9L5 5z" fill="#666"/></svg>
<div id="t134" class="t" style="left:1025.7px;top:827.97px;font-size:10.2px;line-height:10.2px;font-weight:400;color:#777;transform:scaleX(0.9691);transform-origin:0 50%;">Linhas por página</div>
<div id="t135" class="t" style="left:1131.6px;top:827.97px;font-size:10.2px;line-height:10.2px;font-weight:400;color:#777;transform:scaleX(0.9697);transform-origin:0 50%;">10</div>
<svg class="a" style="left:1148px;top:829px;" width="10" height="6" viewBox="0 0 10 6"><path d="M1 1H9L5 5z" fill="#666"/></svg>
<div id="t136" class="t" style="left:1184.6px;top:827.97px;font-size:10.2px;line-height:10.2px;font-weight:400;color:#777;transform:scaleX(0.9453);transform-origin:0 50%;">1 - 10 de 36</div>
<svg class="a" style="left:1262px;top:826px;" width="14" height="13" viewBox="0 0 14 13"><path d="M2.6 1.6V11.4M11.4 1.6L6.6 6.5L11.4 11.4" fill="none" stroke="#777" stroke-width="1.3"/></svg>
<svg class="a" style="left:1297px;top:826px;" width="12" height="13" viewBox="0 0 12 13"><path d="M8.4 1.8L3.8 6.5L8.4 11.2" fill="none" stroke="#777" stroke-width="1.3"/></svg>
<svg class="a" style="left:1330px;top:826px;" width="12" height="13" viewBox="0 0 12 13"><path d="M3.6 1.8L8.2 6.5L3.6 11.2" fill="none" stroke="#777" stroke-width="1.3"/></svg>
<div class="a" style="left:1353.3px;top:809.2px;width:46.8px;height:46.8px;border-radius:50%;background:#4286f5;box-shadow:0 3px 5px rgba(0,0,0,.3)"></div>
<svg class="a" style="left:1367px;top:823px;" width="20" height="20" viewBox="0 0 20 20"><path d="M10 3.4V16.6M3.4 10H16.6" stroke="#fff" stroke-width="2.4"/></svg>
<div class="a" style="left:1405px;top:126px;width:15px;height:746px;background:#fafafa;box-shadow:inset 1px 0 0 #ececec"></div>
<svg class="a" style="left:1406px;top:133px;" width="14" height="9" viewBox="0 0 14 9"><path d="M1 8H13L7 1z" fill="#8a8a8a"/></svg>
<div class="a" style="left:1409px;top:149px;width:11px;height:628px;border-radius:5.5px;background:#8a8a8a"></div>
<svg class="a" style="left:1406px;top:862px;" width="14" height="9" viewBox="0 0 14 9"><path d="M1 1H13L7 8z" fill="#8a8a8a"/></svg>
</body></html>
